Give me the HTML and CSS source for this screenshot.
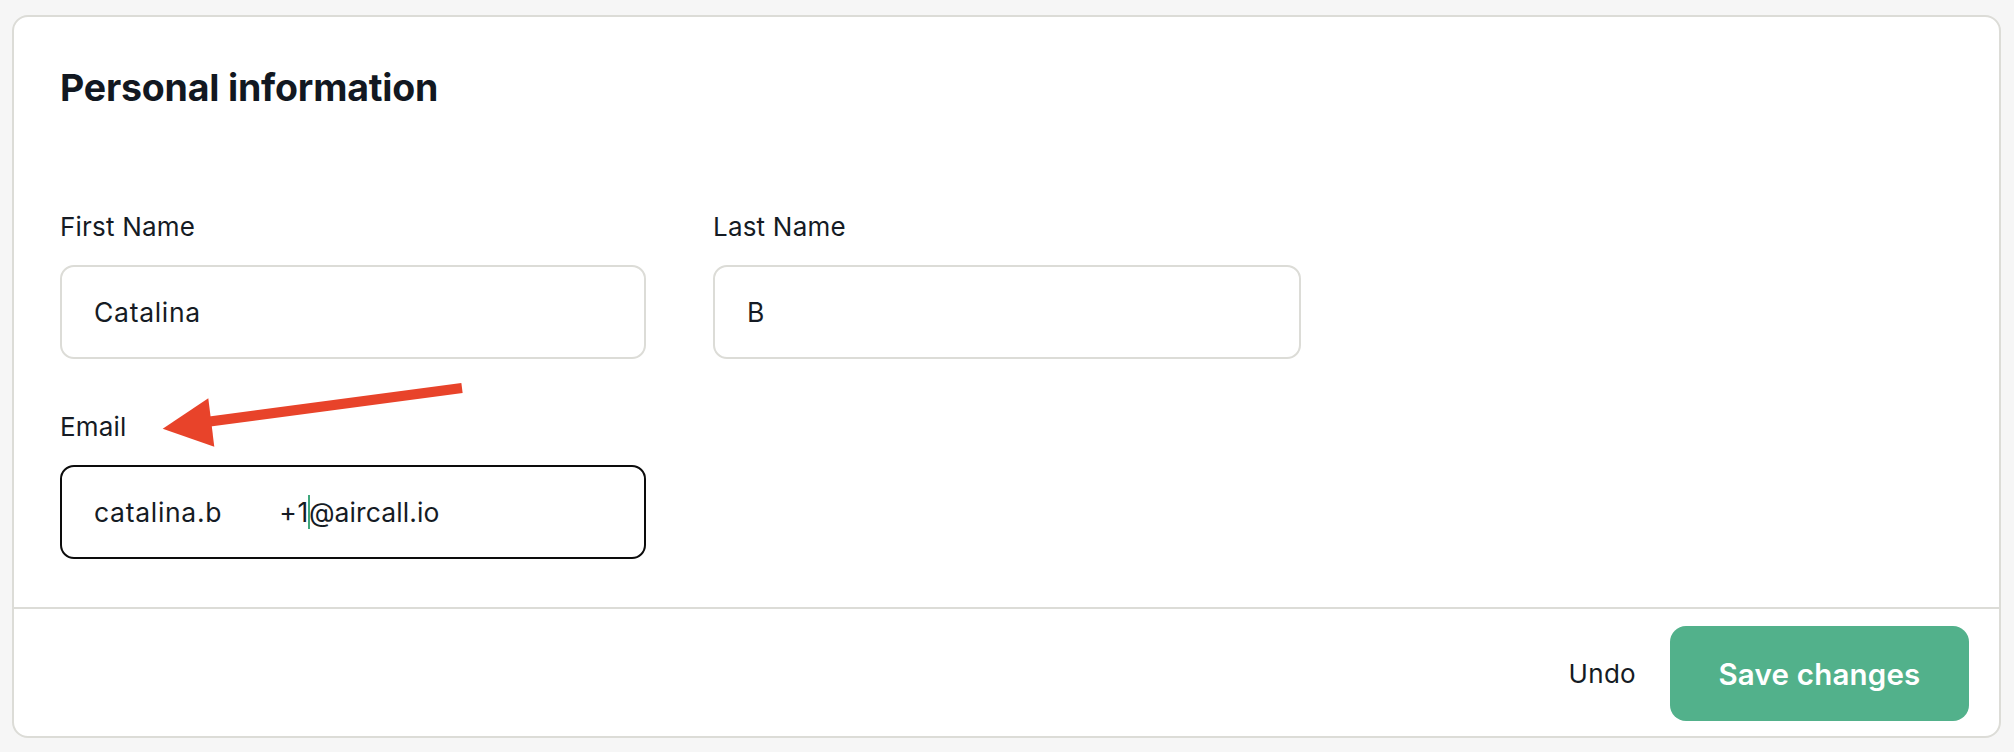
FILE: index.html
```html
<!DOCTYPE html>
<html lang="en">
<head>
<meta charset="utf-8">
<title>Personal information</title>
<link rel="stylesheet" href="styles.css">
</head>
<body>
<section class="card">
  <div class="card-body">
    <h1 class="title">Personal information</h1>
    <div class="fields">
      <div class="field">
        <label class="label">First Name</label>
        <div class="input">Catalina</div>
      </div>
      <div class="field">
        <label class="label">Last Name</label>
        <div class="input">B</div>
      </div>
      <div class="field">
        <label class="label">Email</label>
        <div class="input input-focused"><span class="local">catalina.b</span><span class="gap"></span><span>+1</span><span class="caret"></span><span class="domain">@aircall.io</span></div>
      </div>
    </div>
  </div>
  <footer class="card-footer">
    <button class="btn-undo" type="button">Undo</button>
    <button class="btn-save" type="button">Save changes</button>
  </footer>
</section>
<svg class="annotation" width="320" height="75" viewBox="0 0 320 75" aria-hidden="true">
  <line x1="56" y1="42" x2="312" y2="8" stroke="#e8432a" stroke-width="10" stroke-linecap="butt"/>
  <polygon points="12.7,48.7 58.3,18.3 64.3,66.7" fill="#e8432a"/>
</svg>
</body>
</html>
```
FILE: styles.css
```css
* { box-sizing: border-box; }

html, body {
  margin: 0;
  padding: 0;
}

body {
  background: #f6f6f6;
  font-family: Inter, "Noto Sans", sans-serif;
  color: #151b24;
  position: relative;
  width: 2014px;
  height: 752px;
  overflow: hidden;
}

.card {
  margin: 15px 13px 14px 12px;
  background: #ffffff;
  border: 2px solid #dcdcd7;
  border-radius: 16px;
}

.card-body {
  padding: 48px 0 48px 46px;
}

.title {
  margin: 0 0 100px;
  font-size: 37.5px;
  line-height: 46px;
  font-weight: 700;
  letter-spacing: -0.2px;
  color: #121821;
}

.fields {
  display: grid;
  grid-template-columns: 586px 588px;
  column-gap: 67px;
  row-gap: 52px;
}

.label {
  display: block;
  font-size: 26px;
  line-height: 32px;
  margin-bottom: 22px;
  letter-spacing: 0.2px;
}

.input {
  height: 94px;
  border: 2px solid #dcdcd7;
  border-radius: 14px;
  padding: 0 32px;
  display: flex;
  align-items: center;
  font-size: 26.5px;
  letter-spacing: 0.7px;
  white-space: pre;
}

.input-focused {
  border-color: #0c0c0c;
}

.domain {
  letter-spacing: 0.1px;
}

.gap {
  display: inline-block;
  width: 57px;
}

.caret {
  display: inline-block;
  width: 2px;
  height: 34px;
  background: #3fa77c;
  margin: 0 -1px 0 -1px;
}

.card-footer {
  border-top: 2px solid #dcdcd7;
  padding: 17px 30px 15px;
  display: flex;
  justify-content: flex-end;
  align-items: center;
  gap: 34px;
}

.btn-undo {
  background: none;
  border: none;
  padding: 0;
  font-family: inherit;
  font-size: 26px;
  letter-spacing: 0.3px;
  color: #151b24;
}

.btn-save {
  width: 299px;
  height: 95px;
  border: none;
  border-radius: 16px;
  background: #52b18b;
  color: #ffffff;
  font-family: inherit;
  font-size: 29.5px;
  font-weight: 600;
  letter-spacing: 0.2px;
}

.annotation {
  position: absolute;
  left: 150px;
  top: 380px;
  pointer-events: none;
}
```
